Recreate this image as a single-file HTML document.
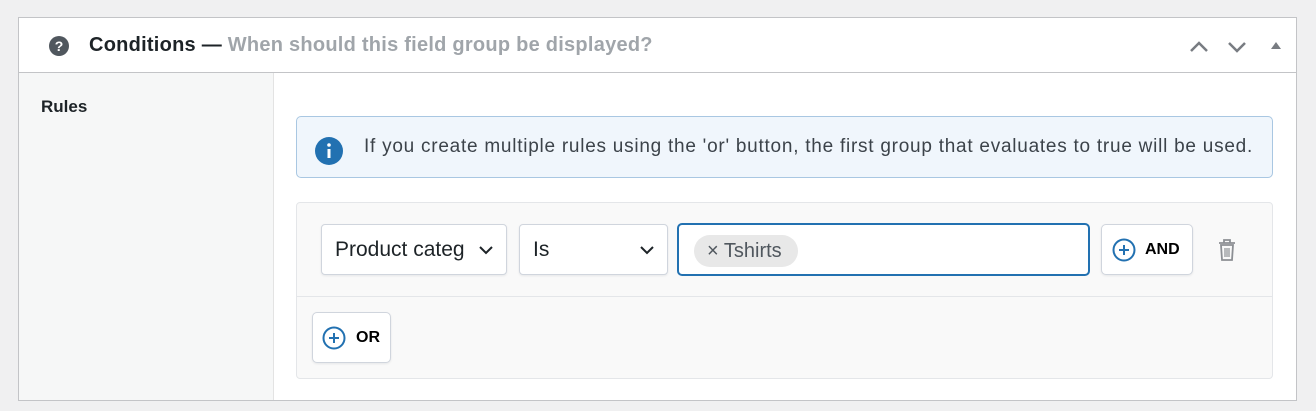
<!DOCTYPE html><html><head><style>
body{margin:0;width:1316px;height:411px;background:#f0f0f1;font-family:"Liberation Sans",sans-serif;position:relative;overflow:hidden}
.a{position:absolute;box-sizing:border-box}
.panel{left:18px;top:17px;width:1279px;height:384px;background:#fff;border:1px solid #c3c4c7}
.hdr{left:0;top:0;width:1277px;height:55px;border-bottom:1px solid #c3c4c7}
.left{left:0;top:55px;width:255px;height:327px;background:#f6f7f7;border-right:1px solid #e3e3e3}
.sel{background:#fff;border:1px solid #d0d5dd;border-radius:4px;box-shadow:0 1px 2px rgba(16,24,40,.08);font-size:21px;color:#1d2327;line-height:50px;padding-left:13px}
.btn{background:#fff;border:1px solid #d0d5dd;border-radius:5px;box-shadow:0 1px 2px rgba(16,24,40,.08);font-weight:bold;font-size:16px;color:#000;display:flex;align-items:center}
</style></head><body>
<div class="a panel">
 <div class="a hdr">
  <svg class="a" style="left:30px;top:18px" width="20" height="20"><circle cx="10" cy="10" r="10" fill="#50575e"/><text x="10" y="15" text-anchor="middle" font-family="Liberation Sans" font-weight="bold" font-size="14" fill="#fff">?</text></svg>
  <div class="a" style="left:70px;top:16px;font-size:20px;letter-spacing:0.25px;font-weight:bold;color:#1d2327;white-space:nowrap">Conditions — <span style="color:#a0a5aa">When should this field group be displayed?</span></div>
  <svg class="a" style="left:1168px;top:20px" width="100" height="16"><path d="M4 13 L12 5 L20 13" stroke="#787c82" stroke-width="2.5" fill="none"/><path d="M42 5 L50 13 L58 5" stroke="#787c82" stroke-width="2.5" fill="none"/><path d="M84 11 L89 4 L94 11 Z" fill="#787c82"/></svg>
 </div>
 <div class="a left"><div class="a" style="left:22px;top:24px;font-size:17px;font-weight:bold;color:#1d2327">Rules</div></div>
</div>
<div class="a" style="left:296px;top:116px;width:977px;height:62px;background:#f0f6fc;border:1px solid #a9c7e2;border-radius:5px">
 <svg class="a" style="left:18px;top:20px" width="28" height="28"><circle cx="14" cy="14" r="14" fill="#2271b1"/><rect x="12.5" y="12" width="3" height="9" fill="#fff"/><circle cx="14" cy="8" r="1.8" fill="#fff"/></svg>
 <div class="a" style="left:67px;top:19px;font-size:19px;letter-spacing:0.75px;color:#3c434a;white-space:nowrap">If you create multiple rules using the 'or' button, the first group that evaluates to true will be used.</div>
</div>
<div class="a" style="left:296px;top:202px;width:977px;height:177px;background:#f9f9f9;border:1px solid #e4e6e9;border-radius:4px">
 <div class="a" style="left:0;top:93px;width:975px;height:1px;background:#e4e6e9"></div>
</div>
<div class="a sel" style="left:321px;top:224px;width:186px;height:51px">Product categ<svg class="a" style="right:12px;top:20px" width="16" height="10"><path d="M2 2 L8 8 L14 2" stroke="#1d2327" stroke-width="2" fill="none"/></svg></div>
<div class="a sel" style="left:519px;top:224px;width:149px;height:51px">Is<svg class="a" style="right:12px;top:20px" width="16" height="10"><path d="M2 2 L8 8 L14 2" stroke="#1d2327" stroke-width="2" fill="none"/></svg></div>
<div class="a" style="left:677px;top:223px;width:413px;height:53px;background:#fff;border:2px solid #2271b1;border-radius:5px">
 <div class="a" style="left:15px;top:10px;height:32px;width:104px;border-radius:16px;background:#e8e8e8;color:#50575e;font-size:20px;line-height:32px;padding-left:13px">× Tshirts</div>
</div>
<div class="a btn" style="left:1101px;top:224px;width:92px;height:51px"><svg style="margin-left:10px;margin-right:9px" width="24" height="24"><circle cx="12" cy="12" r="10.5" stroke="#2271b1" stroke-width="2" fill="none"/><path d="M12 7V17M7 12H17" stroke="#2271b1" stroke-width="2"/></svg>AND</div>
<svg class="a" style="left:1217px;top:238px" width="20" height="24"><path d="M2 5H18M7 5V2H13V5" stroke="#8c8f94" stroke-width="1.8" fill="none"/><path d="M4 7H16L15 22H5Z" stroke="#8c8f94" stroke-width="1.8" fill="none"/><path d="M8 10V19M10 10V19M12 10V19" stroke="#8c8f94" stroke-width="1.2"/></svg>
<div class="a btn" style="left:312px;top:312px;width:79px;height:51px"><svg style="margin-left:9px;margin-right:10px" width="24" height="24"><circle cx="12" cy="12" r="10.5" stroke="#2271b1" stroke-width="2" fill="none"/><path d="M12 7V17M7 12H17" stroke="#2271b1" stroke-width="2"/></svg>OR</div>
</body></html>
